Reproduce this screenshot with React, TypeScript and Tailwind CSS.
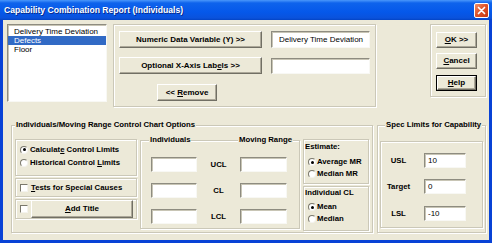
import React from "react";

const sunken =
  "bg-white border border-t-[#8e8c80] border-l-[#8e8c80] border-r-[#f8f8f4] border-b-[#f8f8f4] shadow-[inset_1px_1px_0_#c8c5b5]";
const raised =
  "bg-[#ECE9D8] border border-t-white border-l-white border-r-[#716F64] border-b-[#716F64] shadow-[inset_-1px_-1px_0_#ACA899] flex items-center justify-center font-bold text-[8px]";
const etched = "border border-[#CBC8B8] shadow-[inset_1px_1px_0_#fff,1px_1px_0_#fff]";

function Radio({ checked }: { checked?: boolean }) {
  return (
    <span className="w-[8px] h-[8px] rounded-full bg-white border border-t-[#7a786c] border-l-[#7a786c] border-r-[#f4f3ee] border-b-[#f4f3ee] shrink-0 flex items-center justify-center">
      {checked && <span className="w-[3px] h-[3px] rounded-full bg-black" />}
    </span>
  );
}

function Check() {
  return (
    <span className="w-[8px] h-[8px] bg-white border border-t-[#7a786c] border-l-[#7a786c] border-r-[#f4f3ee] border-b-[#f4f3ee] shrink-0" />
  );
}

function U({ children }: { children: React.ReactNode }) {
  return <span className="underline underline-offset-[1px]">{children}</span>;
}

function CloseBtn() {
  return (
    <div className="w-[15px] h-[15px] rounded-[2px] border border-white bg-[linear-gradient(135deg,#f0906a_0%,#e0552c_45%,#c4360f_100%)] flex items-center justify-center">
      <svg width="9" height="9" viewBox="0 0 9 9">
        <path d="M1.5 1.5 L7.5 7.5 M7.5 1.5 L1.5 7.5" stroke="white" strokeWidth="1.7" strokeLinecap="round" />
      </svg>
    </div>
  );
}

export default function App() {
  return (
    <div className="w-[492px] h-[243px] flex flex-col bg-[#0842D6] font-['Liberation_Sans',Arial,sans-serif] overflow-hidden whitespace-nowrap">
      {/* title bar */}
      <div className="h-[20px] shrink-0 flex items-center justify-between pl-[4px] pr-[3px] bg-[linear-gradient(to_bottom,#4a97fb_0%,#0e63ec_15%,#0558ea_60%,#0a52dc_90%,#0343c4_100%)]">
        <span className="text-white font-bold text-[8.6px] leading-none [text-shadow:1px_1px_0_#0a2a8a]">
          Capability Combination Report (Individuals)
        </span>
        <CloseBtn />
      </div>

      {/* body */}
      <div className="mx-[3px] h-[220px] shrink-0 bg-[#ECE9D8] flex flex-col text-[7.75px] leading-[10px] text-black">
        {/* top row */}
        <div className="flex items-start mt-[4px]">
          {/* list box */}
          <div className={`ml-[4px] w-[100px] h-[78px] ${sunken} pt-[2px] text-[8px] overflow-hidden`}>
            <div className="h-[9px] leading-[9px] pl-[6px]">Delivery Time Deviation</div>
            <div className="h-[9px] leading-[9px] pl-[6px] bg-[#316AC5] text-white">Defects</div>
            <div className="h-[9px] leading-[9px] pl-[6px]">Floor</div>
          </div>

          {/* variable group */}
          <div className={`ml-[6px] w-[263px] h-[83px] ${etched} pl-[5px] pt-[6px] flex flex-col`}>
            <div className="flex items-center">
              <div className={`w-[143px] h-[17px] ${raised}`}>Numeric Data Variable (Y) &gt;&gt;</div>
              <div className={`ml-[9px] w-[99px] h-[17px] ${sunken} pl-[7px] flex items-center text-[8px] overflow-hidden`}>
                Delivery Time Deviation
              </div>
            </div>
            <div className="flex items-center mt-[9px]">
              <div className={`w-[143px] h-[17px] ${raised}`}>
                <span>
                  Optional X-Axis Lab<U>e</U>ls &gt;&gt;
                </span>
              </div>
              <div className={`ml-[9px] w-[99px] h-[16px] ${sunken}`} />
            </div>
            <div className={`ml-[38px] mt-[10px] w-[60px] h-[17px] ${raised}`}>
              <span>
                &lt;&lt; <U>R</U>emove
              </span>
            </div>
          </div>

          {/* OK / Cancel / Help */}
          <div className={`ml-[54px] w-[56px] h-[73px] ${etched} pl-[5px] pt-[7px] flex flex-col`}>
            <div className={`w-[41px] h-[16px] ${raised}`}>
              <span>
                <U>O</U>K &gt;&gt;
              </span>
            </div>
            <div className={`mt-[5px] w-[41px] h-[16px] ${raised}`}>
              <span>
                <U>C</U>ancel
              </span>
            </div>
            <div className="mt-[6px] w-[41px] h-[16px] border border-black flex">
              <div className={`flex-1 ${raised}`}>
                <span>
                  <U>H</U>elp
                </span>
              </div>
            </div>
          </div>
        </div>

        {/* bottom row */}
        <div className="flex items-start mt-[18px]">
          {/* big group */}
          <div className={`relative ml-[8px] w-[362px] h-[108px] ${etched} pl-[3px] pt-[13px] flex items-start`}>
            <span className="absolute left-[3px] top-[-6px] px-[1px] bg-[#ECE9D8] font-bold">
              Individuals/Moving Range Control Chart Options
            </span>

            {/* options column */}
            <div className="w-[122px] flex flex-col">
              <div className={`h-[37px] ${etched} pl-[4px] pt-[3px] flex flex-col font-bold`}>
                <div className="h-[13px] flex items-center gap-[2px]">
                  <Radio checked />
                  <span>
                    Calculat<U>e</U> Control Limits
                  </span>
                </div>
                <div className="h-[13px] flex items-center gap-[2px]">
                  <Radio />
                  <span>
                    Historical Control <U>L</U>imits
                  </span>
                </div>
              </div>
              <div className={`mt-[2px] h-[19px] ${etched} pl-[4px] flex items-center gap-[3px] font-bold`}>
                <Check />
                <span>
                  <U>T</U>ests for Special Causes
                </span>
              </div>
              <div className={`mt-[2px] h-[20px] ${etched} pl-[4px] flex items-center gap-[3px]`}>
                <Check />
                <div className={`w-[102px] h-[18px] ${raised}`}>
                  <span>
                    <U>A</U>dd Title
                  </span>
                </div>
              </div>
            </div>

            {/* Individuals / Moving range frame */}
            <div className={`relative ml-[3px] mt-[1px] w-[160px] h-[89px] ${etched} pl-[10px] pt-[16px] flex flex-col gap-[11px]`}>
              <span className="absolute left-[8px] top-[-6px] px-[1px] bg-[#ECE9D8] font-bold">Individuals</span>
              <span className="absolute left-[97px] top-[-6px] px-[1px] bg-[#ECE9D8] font-bold">Moving Range</span>
              {["UCL", "CL", "LCL"].map((l) => (
                <div key={l} className="flex items-center">
                  <div className={`w-[46px] h-[15px] ${sunken}`} />
                  <div className="w-[43px] text-center font-bold">{l}</div>
                  <div className={`w-[47px] h-[15px] ${sunken}`} />
                </div>
              ))}
            </div>

            {/* estimate column */}
            <div className="ml-[3px] w-[66px] flex flex-col">
              <div className={`h-[45px] ${etched} pl-[1px] pt-[2px] flex flex-col font-bold`}>
                <div>Estimate:</div>
                <div className="mt-[4px] pl-[3px] h-[12px] flex items-center gap-[1px]">
                  <Radio checked />
                  <span>Average MR</span>
                </div>
                <div className="pl-[3px] h-[12px] flex items-center gap-[1px]">
                  <Radio />
                  <span>Median MR</span>
                </div>
              </div>
              <div className={`mt-[2px] h-[45px] ${etched} pl-[1px] pt-[1px] flex flex-col font-bold`}>
                <div>Individual CL</div>
                <div className="mt-[3px] pl-[3px] h-[12px] flex items-center gap-[1px]">
                  <Radio checked />
                  <span>Mean</span>
                </div>
                <div className="pl-[3px] h-[12px] flex items-center gap-[1px]">
                  <Radio />
                  <span>Median</span>
                </div>
              </div>
            </div>
          </div>

          {/* spec limits group */}
          <div className={`relative ml-[4px] w-[109px] h-[108px] ${etched} pl-[2px] pt-[15px]`}>
            <span className="absolute left-[7px] top-[-6px] px-[1px] bg-[#ECE9D8] font-bold">
              Spec Limits for Capability
            </span>
            <div className={`w-[103px] h-[87px] ${etched} pt-[11px] flex flex-col`}>
              {[
                ["USL", "10", ""],
                ["Target", "0", "mt-[11px]"],
                ["LSL", "-10", "mt-[12px]"],
              ].map(([l, v, m]) => (
                <div key={l} className={`flex items-center ${m}`}>
                  <div className="w-[35px] text-center font-bold">{l}</div>
                  <div className={`ml-[8px] w-[42px] h-[15px] ${sunken} pl-[3px] flex items-center text-[8px]`}>{v}</div>
                </div>
              ))}
            </div>
          </div>
        </div>
      </div>
    </div>
  );
}
